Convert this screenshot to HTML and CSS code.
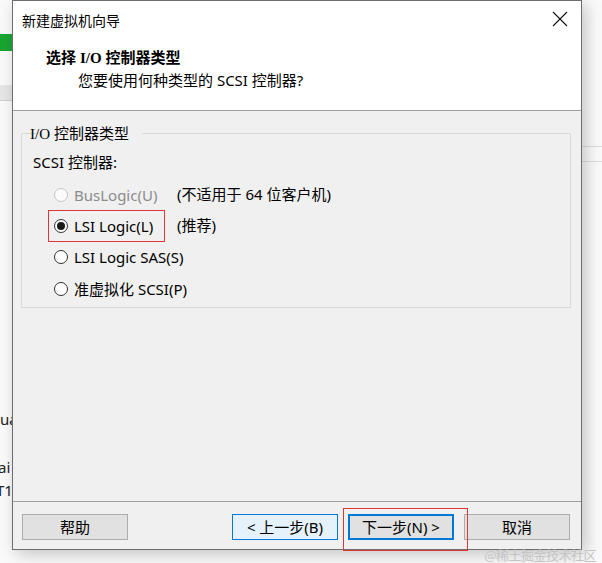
FILE: index.html
```html
<!DOCTYPE html>
<html lang="zh-CN">
<head>
<meta charset="utf-8">
<title>新建虚拟机向导</title>
<link rel="stylesheet" href="styles.css">
</head>
<body>
<div class="desktop">
  <div class="bg-green"></div>
  <div class="bg-band"></div>
  <div class="bg-text t1">ua</div>
  <div class="bg-text t2">ai</div>
  <div class="bg-text t3">T1</div>
  <div class="bg-line r1"></div>
  <div class="bg-line r2"></div>

  <div class="dialog">
    <div class="header">
      <div class="titlebar">
        <span class="title">新建虚拟机向导</span>
        <svg class="close" width="16" height="16" viewBox="0 0 16 16"><path d="M1 1 L15 15 M15 1 L1 15" stroke="#111" stroke-width="1.1" fill="none"/></svg>
      </div>
      <div class="heading">选择 <span class="serif">I/O</span> 控制器类型</div>
      <div class="subheading">您要使用何种类型的 SCSI 控制器?</div>
    </div>
    <div class="body">
      <fieldset class="group">
        <legend><span class="serif">I/O</span> 控制器类型</legend>
        <div class="sublabel">SCSI 控制器:</div>
        <div class="options">
          <div class="opt disabled"><span class="radio"></span><span>BusLogic(U)</span></div>
          <div class="note">(不适用于 64 位客户机)</div>
          <div class="opt highlight"><span class="radio checked"></span><span>LSI Logic(L)</span></div>
          <div class="note">(推荐)</div>
          <div class="opt"><span class="radio"></span><span>LSI Logic SAS(S)</span></div>
          <div class="note"></div>
          <div class="opt"><span class="radio"></span><span>准虚拟化 SCSI(P)</span></div>
          <div class="note"></div>
        </div>
      </fieldset>
    </div>
    <div class="footer">
      <button class="btn">帮助</button>
      <div class="spacer"></div>
      <button class="btn hover">&lt; 上一步(B)</button>
      <button class="btn default">下一步(N) &gt;</button>
      <button class="btn">取消</button>
    </div>
  </div>
  <div class="watermark">@稀土掘金技术社区</div>
</div>
</body>
</html>
```

FILE: styles.css
```css
html, body {
  margin: 0;
  padding: 0;
  background: #ffffff;
}
body {
  font-family: "Noto Sans", "Noto Sans CJK SC", sans-serif;
  color: #000;
}
.desktop {
  position: relative;
  width: 602px;
  height: 563px;
  overflow: hidden;
  background: #fafafa;
}
.bg-green {
  position: absolute;
  left: 0; top: 34px;
  width: 14px; height: 17px;
  background: #1aa532;
}
.bg-band {
  position: absolute;
  left: 0; top: 85px;
  width: 14px; height: 15px;
  background: #e6e6e6;
  border-bottom: 1px solid #cfcfcf;
}
.bg-text {
  position: absolute;
  left: 0;
  font-size: 15px;
  color: #222;
  font-family: "Noto Sans", sans-serif;
}
.t1 { top: 409px; }
.t2 { top: 457px; left: -2px; }
.t3 { top: 480px; left: -4px; }
.bg-line {
  position: absolute;
  left: 582px;
  width: 20px;
  height: 1px;
  background: #dcdcdc;
}
.r1 { top: 146px; }
.r2 { top: 161px; }

.dialog {
  position: absolute;
  left: 12px;
  top: 0;
  width: 568px;
  height: 548px;
  border: 1px solid #6e6e6e;
  background: #f0f0f0;
  box-shadow: 4px 4px 16px rgba(0,0,0,0.22);
  display: flex;
  flex-direction: column;
}
.header {
  background: #fff;
  height: 110px;
  box-sizing: border-box;
  border-bottom: 1px solid #a0a0a0;
  flex: none;
}
.titlebar {
  height: 37px;
  display: flex;
  align-items: center;
  justify-content: space-between;
  padding: 0 13px 0 9px;
}
.title {
  font-size: 14px;
}
.close {
  margin-top: -2px;
}
.heading {
  margin-top: 8px;
  padding-left: 33px;
  font-size: 15px;
  font-weight: bold;
  line-height: 22px;
}
.serif {
  font-family: "Liberation Serif", "Noto Sans CJK SC", serif;
  font-weight: inherit;
}
.subheading {
  padding-left: 65px;
  font-size: 15px;
  line-height: 22px;
}
.body {
  height: 391px;
  box-sizing: border-box;
  border-bottom: 1px solid #a0a0a0;
  padding: 13px 10px 0 8px;
  flex: none;
}
.group {
  margin: 0;
  padding: 0 0 0 11px;
  height: 184px;
  border: 1px solid #d9d9d9;
  min-width: 0;
  box-sizing: border-box;
}
.group legend {
  margin-left: 6px;
  padding: 0 2px;
  font-size: 15px;
  line-height: 18px;
  position: relative;
  left: -11px;
}
.sublabel {
  font-size: 15px;
  line-height: 20px;
  margin-top: 9px;
}
.options {
  display: grid;
  grid-template-columns: 144px auto;
  grid-auto-rows: 31.4px;
  margin-top: 7px;
}
.opt {
  display: flex;
  align-items: center;
  gap: 6px;
  font-size: 15px;
  position: relative;
  padding-left: 21px;
  white-space: nowrap;
}
.note {
  font-size: 15px;
  display: flex;
  align-items: center;
  margin-top: -3px;
  white-space: nowrap;
}
.radio {
  width: 12px;
  height: 12px;
  border: 1px solid #333;
  border-radius: 50%;
  background: #fff;
  display: inline-flex;
  align-items: center;
  justify-content: center;
  flex: none;
}
.radio.checked::after {
  content: "";
  width: 8px;
  height: 8px;
  border-radius: 50%;
  background: #1a1a1a;
}
.opt.disabled { color: #8c8c8c; }
.opt.disabled .radio { border-color: #c4c4c4; background: #fbfbfb; }
.opt.highlight::before {
  content: "";
  position: absolute;
  left: 15px;
  top: 0;
  width: 117px;
  height: 32px;
  box-sizing: border-box;
  border: 1px solid #e0363a;
}
.footer {
  height: 47px;
  box-sizing: border-box;
  flex: none;
  display: flex;
  align-items: flex-start;
  gap: 10px;
  padding: 12px 11px 0 9px;
}
.spacer { flex: 1; }
.btn {
  width: 106px;
  height: 26px;
  box-sizing: border-box;
  border: 1px solid #adadad;
  background: #e1e1e1;
  font-family: "Noto Sans", "Noto Sans CJK SC", sans-serif;
  font-size: 15px;
  color: #000;
  padding: 0;
  line-height: 22px;
  flex: none;
}
.btn.hover {
  background: #e5f1fb;
  border-color: #0078d7;
}
.btn.default {
  border: 2px solid #0078d7;
  position: relative;
  z-index: 1;
}
.btn.default::after {
  content: "";
  position: absolute;
  left: -7px;
  top: -8px;
  width: 125px;
  height: 43px;
  box-sizing: border-box;
  border: 1px solid #e0363a;
  pointer-events: none;
}
.watermark {
  position: absolute;
  right: 6px;
  top: 545px;
  font-size: 13px;
  color: #c4c4c4;
  font-family: "Noto Sans CJK SC", sans-serif;
  letter-spacing: -0.5px;
}
```
